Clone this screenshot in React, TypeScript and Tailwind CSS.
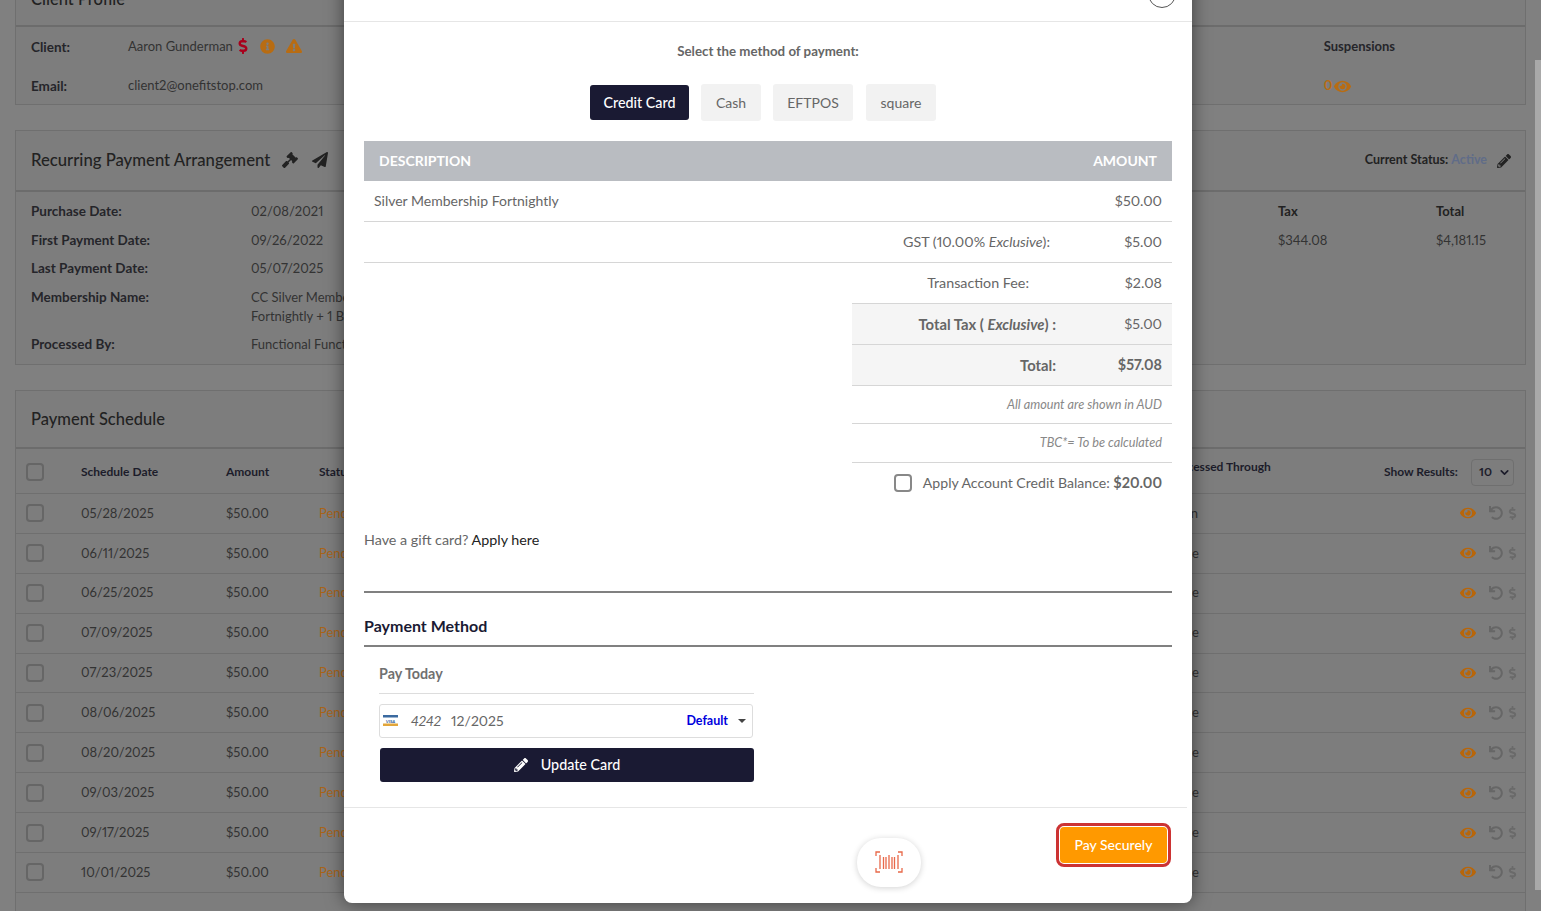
import { FaDollarSign, FaExclamationTriangle, FaEye, FaGavel, FaInfoCircle, FaPaperPlane, FaPencilAlt, FaUndo } from "react-icons/fa"
import { ChevronDown } from "lucide-react"

const dates = ["05/28/2025", "06/11/2025", "06/25/2025", "07/09/2025", "07/23/2025", "08/06/2025", "08/20/2025", "09/03/2025", "09/17/2025", "10/01/2025"]

const details = [
    { label: "Purchase Date:", value: "02/08/2021", h: "h-[29px]" },
    { label: "First Payment Date:", value: "09/26/2022", h: "h-[28px]" },
    { label: "Last Payment Date:", value: "05/07/2025", h: "h-[29px]" },
    { label: "Membership Name:", value: "CC Silver Membership", h: "h-[19px]" },
    { label: "", value: "Fortnightly + 1 Bonus", h: "h-[28px]" },
    { label: "Processed By:", value: "Functional Functions", h: "h-[28px]" },
]

function Barcode() {
    return (
        <svg width="28" height="22" viewBox="0 0 28 22" fill="none" stroke="#e8694a" strokeWidth="1.3">
            <path d="M5 1H1v4M23 1h4v4M5 21H1v-4M23 21h4v-4" />
            <path d="M5 4v14M8.500 6v12M11 6v12M14 4v14M17 6v12M19.500 6v12M23 4v14" />
        </svg>
    )
}

function VisaIcon() {
    return (
        <svg width="15" height="11" viewBox="0 0 15 11">
            <rect width="15" height="11" fill="#fff" />
            <rect width="15" height="2.500" fill="#3b6aa0" />
            <rect y="8.500" width="15" height="2.500" fill="#e2a63b" />
            <text x="7.500" y="7.500" fontSize="4.500" fontWeight="700" fontStyle="italic" fill="#2a5a9a" textAnchor="middle">VISA</text>
        </svg>
    )
}

export default function App() {
    return (
        <div className="relative h-[911px] overflow-hidden bg-[#808080] font-['Lato',sans-serif] text-[13px] text-[#333] proportional-nums">
            {/* page behind the dialog */}
            <div className="mt-[-34px] flex flex-col gap-[25px] px-[15px] w-[1541px]">
                <div className="border border-[#6f6f6f] bg-[#7d7d7d] h-[139px]">
                    <div className="h-[60px] border-b-2 border-[#6c6c6c] px-[15px] pt-[20px] text-[16.500px] font-medium text-[#222]">Client Profile</div>
                    <div className="flex justify-between pl-[15px] pr-[130px] pt-[10px]">
                        <div>
                            <div className="flex items-center h-[20px]">
                                <span className="w-[97px] text-[13.500px] leading-[19px] font-bold text-[#25252a]">Client:</span>
                                <span>Aaron Gunderman</span>
                                <FaDollarSign className="ml-[2px] -mt-[2px] text-[#a8001c] text-[16px]" />
                                <FaInfoCircle className="ml-[9px] -mt-[2px] text-[#b86c12] text-[15px]" />
                                <FaExclamationTriangle className="ml-[11px] -mt-[2px] text-[#b86c12] text-[16px]" />
                            </div>
                            <div className="flex items-center h-[20px] mt-[19px]">
                                <span className="w-[97px] text-[13.500px] leading-[19px] font-bold text-[#25252a]">Email:</span>
                                <span>client2@onefitstop.com</span>
                            </div>
                        </div>
                        <div>
                            <div className="flex items-center h-[20px] font-bold text-[#25252a]">Suspensions</div>
                            <div className="flex items-center h-[20px] mt-[19px] font-bold text-[#b86c12]">
                                0<FaEye className="ml-[2px] text-[17px]" />
                            </div>
                        </div>
                    </div>
                </div>

                <div className="border border-[#6f6f6f] bg-[#7d7d7d] h-[235px]">
                    <div className="flex items-center justify-between h-[61px] border-b-2 border-[#6c6c6c] pl-[15px] pr-[14px]">
                        <div className="flex items-center text-[16.700px] font-medium text-[#222]">
                            Recurring Payment Arrangement
                            <FaGavel className="ml-[12px] text-[16px]" />
                            <FaPaperPlane className="ml-[14px] text-[16px]" />
                        </div>
                        <div className="flex items-center text-[12.500px] font-bold text-[#222]">
                            Current Status:<span className="ml-[3px] text-[#606c88]">Active</span>
                            <FaPencilAlt className="ml-[10px] text-[14px]" />
                        </div>
                    </div>
                    <div className="flex justify-between pl-[15px] pr-[41px] pt-[10px]">
                        <div>
                            {details.map((d) => (
                                <div key={d.value} className={`flex ${d.h}`}>
                                    <span className="w-[220px] text-[13.500px] leading-[19px] font-bold text-[#25252a]">{d.label}</span>
                                    <span className="whitespace-nowrap leading-[19px]">{d.value}</span>
                                </div>
                            ))}
                        </div>
                        <div className="flex">
                            <div className="w-[158px]">
                                <div className="h-[29px] text-[#222] font-bold">Tax</div>
                                <div>$344.08</div>
                            </div>
                            <div className="w-[48px] whitespace-nowrap">
                                <div className="h-[29px] text-[#222] font-bold">Total</div>
                                <div>$4,181.15</div>
                            </div>
                        </div>
                    </div>
                </div>

                <div className="border border-[#6f6f6f] bg-[#7d7d7d] h-[560px]">
                    <div className="flex items-center h-[58px] border-b-2 border-[#6c6c6c] pl-[15px] pt-[1px] text-[16.500px] font-medium text-[#222]">Payment Schedule</div>
                    <div className="flex items-center h-[45px] border-b border-[#6f6f6f] pt-[2px] text-[12px] font-bold text-[#1c1c2a]">
                        <div className="ml-[10px] size-[18px] rounded-[4px] border-2 border-[#666]"></div>
                        <div className="ml-[37px] w-[145px]">Schedule Date</div>
                        <div className="w-[93px]">Amount</div>
                        <div className="w-[850px]">Status</div>
                        <div className="w-[215px] -mt-[10px] whitespace-nowrap">Processed Through</div>
                        <div className="whitespace-nowrap">Show Results:</div>
                        <div className="ml-[13px] flex items-center justify-between w-[43px] h-[27px] rounded-[4px] border border-[#6f6f6f] pl-[7px] pr-[2px] text-[#1c1c2a]">
                            10 <ChevronDown size={13} strokeWidth={3} />
                        </div>
                    </div>
                    {dates.map((date, i) => (
                        <div key={date} className="flex items-center h-[39.900px] border-b border-[#6f6f6f]">
                            <div className="ml-[10px] size-[18px] rounded-[4px] border-2 border-[#666]"></div>
                            <div className="ml-[37px] w-[145px]">{date}</div>
                            <div className="w-[93px]">$50.00</div>
                            <div className="w-[842px] text-[#a8641a]">Pending</div>
                            <div className="w-[299px]">{i === 0 ? "Admin" : "Online"}</div>
                            <FaEye className="text-[#b8660a] text-[16px]" />
                            <FaUndo className="ml-[13px] text-[#666] text-[14px]" />
                            <FaDollarSign className="ml-[3px] text-[#6a6a6a] text-[13px]" />
                        </div>
                    ))}
                </div>
            </div>

            {/* browser scrollbar */}
            <div className="absolute right-0 top-[60px] w-[6px] h-[830px] bg-[#a9a9a9]"></div>

            {/* dialog */}
            <div className="absolute left-[344px] top-[-40px] w-[848px] h-[943px] rounded-b-lg bg-white shadow-[0_0_18px_rgba(0,0,0,0.5)] text-[#666]">
                <div className="relative h-[62px] border-b border-[#e6e6e6]">
                    <div className="absolute left-[804px] top-[20px] size-[28px] rounded-full border border-[#555]"></div>
                </div>

                <div className="px-[20px]">
                    <div className="pt-[20px] text-center text-[13.300px] font-bold text-[#666]">Select the method of payment:</div>
                    <div className="mt-[22px] ml-[226px] flex items-center gap-[12px] text-[14px]">
                        <button className="h-[35px] w-[99px] rounded-[3px] bg-[#1a1a33] text-[14.300px] font-medium text-white">Credit Card</button>
                        <button className="h-[37px] w-[60px] rounded-[3px] bg-[#f2f2f2] text-[#666]">Cash</button>
                        <button className="h-[37px] w-[80px] rounded-[3px] bg-[#f2f2f2] text-[#666]">EFTPOS</button>
                        <button className="ml-[1px] h-[37px] w-[70px] rounded-[3px] bg-[#f2f2f2] text-[#666]">square</button>
                    </div>

                    <div className="mt-[20px] flex items-center justify-between h-[40px] bg-[#b9bcc1] px-[15px] text-[14px] font-bold text-white">
                        <span>DESCRIPTION</span>
                        <span>AMOUNT</span>
                    </div>

                    <div className="text-[14px]">
                        <div className="flex items-center justify-between h-[41px] border-b border-[#d6d6d6] px-[10px]">
                            <span>Silver Membership Fortnightly</span>
                            <span className="text-[14.300px]">$50.00</span>
                        </div>
                        <div className="flex items-center justify-end h-[41px] border-b border-[#d6d6d6] pr-[10px]">
                            <span className="text-[14.300px]">GST (10.00% <i>Exclusive</i>):</span>
                            <span className="w-[112px] text-right text-[14.300px]">$5.00</span>
                        </div>
                        <div className="ml-[488px] w-[320px]">
                            <div className="flex items-center justify-end h-[41px] border-b border-[#d6d6d6] pr-[10px]">
                                <span className="text-[14.300px]">Transaction Fee:</span>
                                <span className="w-[133px] text-right text-[14.300px]">$2.08</span>
                            </div>
                            <div className="flex items-center justify-end h-[41px] border-b border-[#d6d6d6] bg-[#f5f5f5] pr-[10px]">
                                <span className="text-[14.800px] font-bold">Total Tax ( <i>Exclusive</i>) :</span>
                                <span className="w-[106px] text-right text-[14.300px]">$5.00</span>
                            </div>
                            <div className="flex items-center justify-end h-[41px] border-b border-[#d6d6d6] bg-[#f5f5f5] pr-[10px] font-bold">
                                <span className="text-[14.800px]">Total:</span>
                                <span className="w-[106px] text-right text-[14.300px]">$57.08</span>
                            </div>
                            <div className="flex items-center justify-end h-[38px] border-b border-[#d6d6d6] pr-[10px] text-[12.700px] italic text-[#888]">All amount are shown in AUD</div>
                            <div className="flex items-center justify-end h-[39px] border-b border-[#d6d6d6] pr-[10px] text-[12.700px] italic text-[#888]">TBC*= To be calculated</div>
                        </div>
                        <div className="flex items-center justify-end h-[40px] pr-[10px]">
                            <div className="mr-[11px] size-[18px] rounded-[4px] border-2 border-[#888]"></div>
                            <span className="text-[14.100px]">Apply Account Credit Balance: <b className="text-[14.400px]">$20.00</b></span>
                        </div>

                        <div className="mt-[26px] h-[64px] border-b-2 border-[#808080] text-[14.300px]">
                            Have a gift card? <span className="text-[#222]">Apply here</span>
                        </div>
                    </div>

                    <div className="flex items-center h-[54px] border-b-2 border-[#808080] pt-[15px] text-[16px] font-bold text-[#1a1a33]">Payment Method</div>

                    <div className="ml-[15px] w-[375px]">
                        <div className="flex items-center h-[47px] border-b border-[#ddd] pt-[7px] text-[14.300px] font-bold text-[#707070]">Pay Today</div>
                        <div className="mt-[10px] flex items-center h-[34px] w-[374px] rounded-[3px] border border-[#ddd] pl-[3px] pr-[6px] text-[14px]">
                            <VisaIcon />
                            <i className="ml-[13px]">4242</i>
                            <span className="ml-[10px]">12/2025</span>
                            <span className="ml-auto text-[12.500px] font-bold text-[#0000dd]">Default</span>
                            <span className="ml-[10px] border-x-[4px] border-t-[4px] border-x-transparent border-t-[#444]"></span>
                        </div>
                        <button className="mt-[10px] flex items-center justify-center w-[374px] h-[34px] ml-[1px] rounded-[3px] bg-[#1a1a33] text-[14.300px] font-medium text-white">
                            <FaPencilAlt className="mr-[13px] text-[14px]" />
                            Update Card
                        </button>
                    </div>
                </div>

                <div className="mt-[25px] mr-[5px] flex h-[96px] border-t border-[#e6e6e6]">
                    <div className="ml-[513px] mt-[30px] flex items-center justify-center w-[64px] h-[49px] rounded-[24px] bg-white shadow-[0_1px_6px_rgba(0,0,0,0.18)]">
                        <Barcode />
                    </div>
                    <button className="ml-[139px] mt-[19px] h-[36px] w-[107px] rounded-[4px] bg-[#ff9900] text-[14px] font-medium text-white outline-[3px] outline-offset-[1px] outline-[#cc3333]">Pay Securely</button>
                </div>
            </div>
        </div>
    )
}
